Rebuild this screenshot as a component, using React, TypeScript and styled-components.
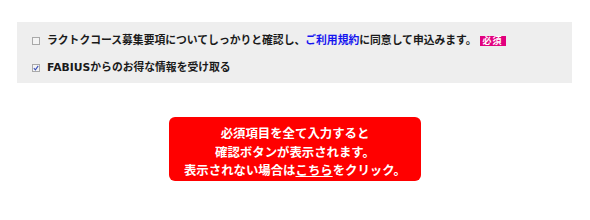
import React from "react";
import styled, { createGlobalStyle } from "styled-components";

const GlobalStyle = createGlobalStyle`
  html, body {
    margin: 0;
    padding: 0;
    background: #ffffff;
  }
  body {
    font-family: "DejaVu Sans", "Noto Sans CJK JP", sans-serif;
    color: #222222;
  }
`;

const Page = styled.div`
  width: 590px;
  height: 220px;
  padding-top: 22px;
  box-sizing: border-box;
  display: flex;
  flex-direction: column;
  align-items: flex-start;
`;

const AgreePanel = styled.div`
  margin-left: 17px;
  width: 555px;
  height: 61px;
  box-sizing: border-box;
  background: #eeeeee;
  padding: 12px 0 0 15px;
  display: flex;
  flex-direction: column;
  gap: 13px;
`;

const Row = styled.label`
  display: flex;
  align-items: center;
  gap: 7px;
  height: 14px;
  font-size: 10.8px;
  font-weight: bold;
  line-height: 14px;
  color: #1a1a1a;
  white-space: nowrap;
`;

const Box = styled.span<{ $checked?: boolean }>`
  display: inline-flex;
  align-items: center;
  justify-content: center;
  width: 8px;
  height: 8px;
  box-sizing: border-box;
  border: 1px solid #a9a9a9;
  background: #f4f4f4;
  flex-shrink: 0;
`;

const TermsLink = styled.a`
  color: #1515f0;
  text-decoration: none;
`;

const Required = styled.span`
  display: inline-flex;
  align-items: center;
  justify-content: center;
  margin-left: -4px;
  width: 26px;
  height: 10px;
  background: #e1007e;
  color: #ffffff;
  font-size: 9px;
  line-height: 10px;
  font-weight: bold;
  letter-spacing: 1px;
`;

const Notice = styled.div`
  margin: 34px 0 0 169px;
  width: 252px;
  height: 64px;
  box-sizing: border-box;
  background: #ff0000;
  border-radius: 6px;
  color: #ffffff;
  font-size: 12.4px;
  font-weight: bold;
  line-height: 18.5px;
  text-align: center;
  padding-top: 8px;
`;

const NoticeLink = styled.a`
  color: #ffffff;
  text-decoration: underline;
`;

const Check = () => (
  <svg width="6" height="6" viewBox="0 0 6 6">
    <path d="M0.8 3.2 L2.4 4.8 L5.2 0.9" fill="none" stroke="#3a4fb8" strokeWidth="1.1" />
  </svg>
);

const App = () => {
  return (
    <Page>
      <GlobalStyle />
      <AgreePanel>
        <Row>
          <Box />
          <span>
            ラクトクコース募集要項についてしっかりと確認し、
            <TermsLink>ご利用規約</TermsLink>に同意して申込みます。
          </span>
          <Required>必須</Required>
        </Row>
        <Row>
          <Box $checked>
            <Check />
          </Box>
          <span>FABIUSからのお得な情報を受け取る</span>
        </Row>
      </AgreePanel>
      <Notice>
        必須項目を全て入力すると
        <br />
        確認ボタンが表示されます。
        <br />
        表示されない場合は<NoticeLink>こちら</NoticeLink>をクリック。
      </Notice>
    </Page>
  );
};

export default App;
